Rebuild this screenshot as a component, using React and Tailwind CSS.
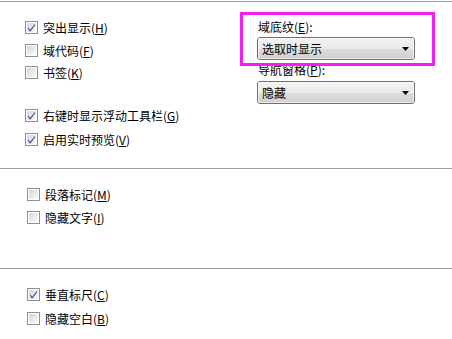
import React from "react";

function Box({ checked }) {
  return (
    <span className="relative flex-none w-[13px] h-[13px] border border-[#8e8f8f] bg-white p-px">
      <span className="block w-full h-full bg-gradient-to-br from-[#d4d6da] via-[#e8e9eb] to-[#fafafa]" />
      {checked && (
        <svg className="absolute left-0 top-0" width="11" height="11" viewBox="0 0 11 11">
          <path d="M2 5.2 L4.2 7.8 L9 1.8 L9 3.4 L4.4 9.4 L3.8 9.4 L2 6.8 Z" fill="#3c5294" />
        </svg>
      )}
    </span>
  );
}

function Row({ checked, label, k, className = "" }) {
  return (
    <div className={"flex items-center h-[13px] " + className}>
      <Box checked={checked} />
      <span className="ml-[5px] text-[12px] leading-[13px] text-black whitespace-nowrap">
        {label}(<span className="underline underline-offset-1">{k}</span>)
      </span>
    </div>
  );
}

function Combo({ value, className = "" }) {
  return (
    <div className={"relative w-[158px] h-[23px] rounded-[3px] border border-[#707070] overflow-hidden " + className}>
      <div className="absolute inset-0 flex flex-col">
        <div className="h-1/2 bg-gradient-to-b from-[#f2f2f2] to-[#ebebeb]" />
        <div className="h-1/2 bg-gradient-to-b from-[#dddddd] to-[#cfcfcf]" />
      </div>
      <div className="absolute inset-0 rounded-[2px] border border-white/60" />
      <div className="relative flex items-center h-full pl-[4px] pr-[5px]">
        <span className="flex-1 text-[12px] leading-[16px] text-black">{value}</span>
        <svg width="7" height="4" viewBox="0 0 7 4">
          <path d="M0 0 H7 L3.5 4 Z" fill="#000" />
        </svg>
      </div>
    </div>
  );
}

export default function App() {
  return (
    <div
      className="w-[452px] h-[339px] bg-white overflow-hidden flex flex-col"
      style={{ fontFamily: '"Noto Sans CJK SC", "Noto Sans", sans-serif' }}
    >
      <div className="h-px flex-none" />
      <div className="h-px flex-none bg-[#a0a0a0]" />
      <div className="relative h-[166px] flex-none flex">
        <div className="w-[257px] flex-none pl-[25px] pt-[19px] flex flex-col">
          <Row checked label="突出显示" k="H" />
          <Row label="域代码" k="F" className="mt-[10px]" />
          <Row label="书签" k="K" className="mt-[9px]" />
          <Row checked label="右键时显示浮动工具栏" k="G" className="mt-[30px]" />
          <Row checked label="启用实时预览" k="V" className="mt-[11px]" />
        </div>
        <div className="flex flex-col pt-[17px]">
          <div className="h-[16px] pl-px text-[12px] leading-[16px] text-black">
            域底纹(<span className="underline underline-offset-1">E</span>):
          </div>
          <Combo value="选取时显示" className="mt-[2px]" />
          <div className="h-[16px] mt-[2px] pl-px text-[12px] leading-[16px] text-black">
            导航窗格(<span className="underline underline-offset-1">P</span>):
          </div>
          <Combo value="隐藏" className="mt-[3px]" />
        </div>
        <div className="absolute left-[240px] top-[10px] w-[195px] h-[54px] border-[3px] border-[#f41ef4]" />
      </div>
      <div className="h-px flex-none bg-[#a0a0a0]" />
      <div className="h-[99px] flex-none pl-[27px] pt-[19px] flex flex-col">
        <Row label="段落标记" k="M" />
        <Row label="隐藏文字" k="I" className="mt-[10px]" />
      </div>
      <div className="h-px flex-none bg-[#a0a0a0]" />
      <div className="flex-1 pl-[27px] pt-[19px] flex flex-col">
        <Row checked label="垂直标尺" k="C" />
        <Row label="隐藏空白" k="B" className="mt-[11px]" />
      </div>
    </div>
  );
}
